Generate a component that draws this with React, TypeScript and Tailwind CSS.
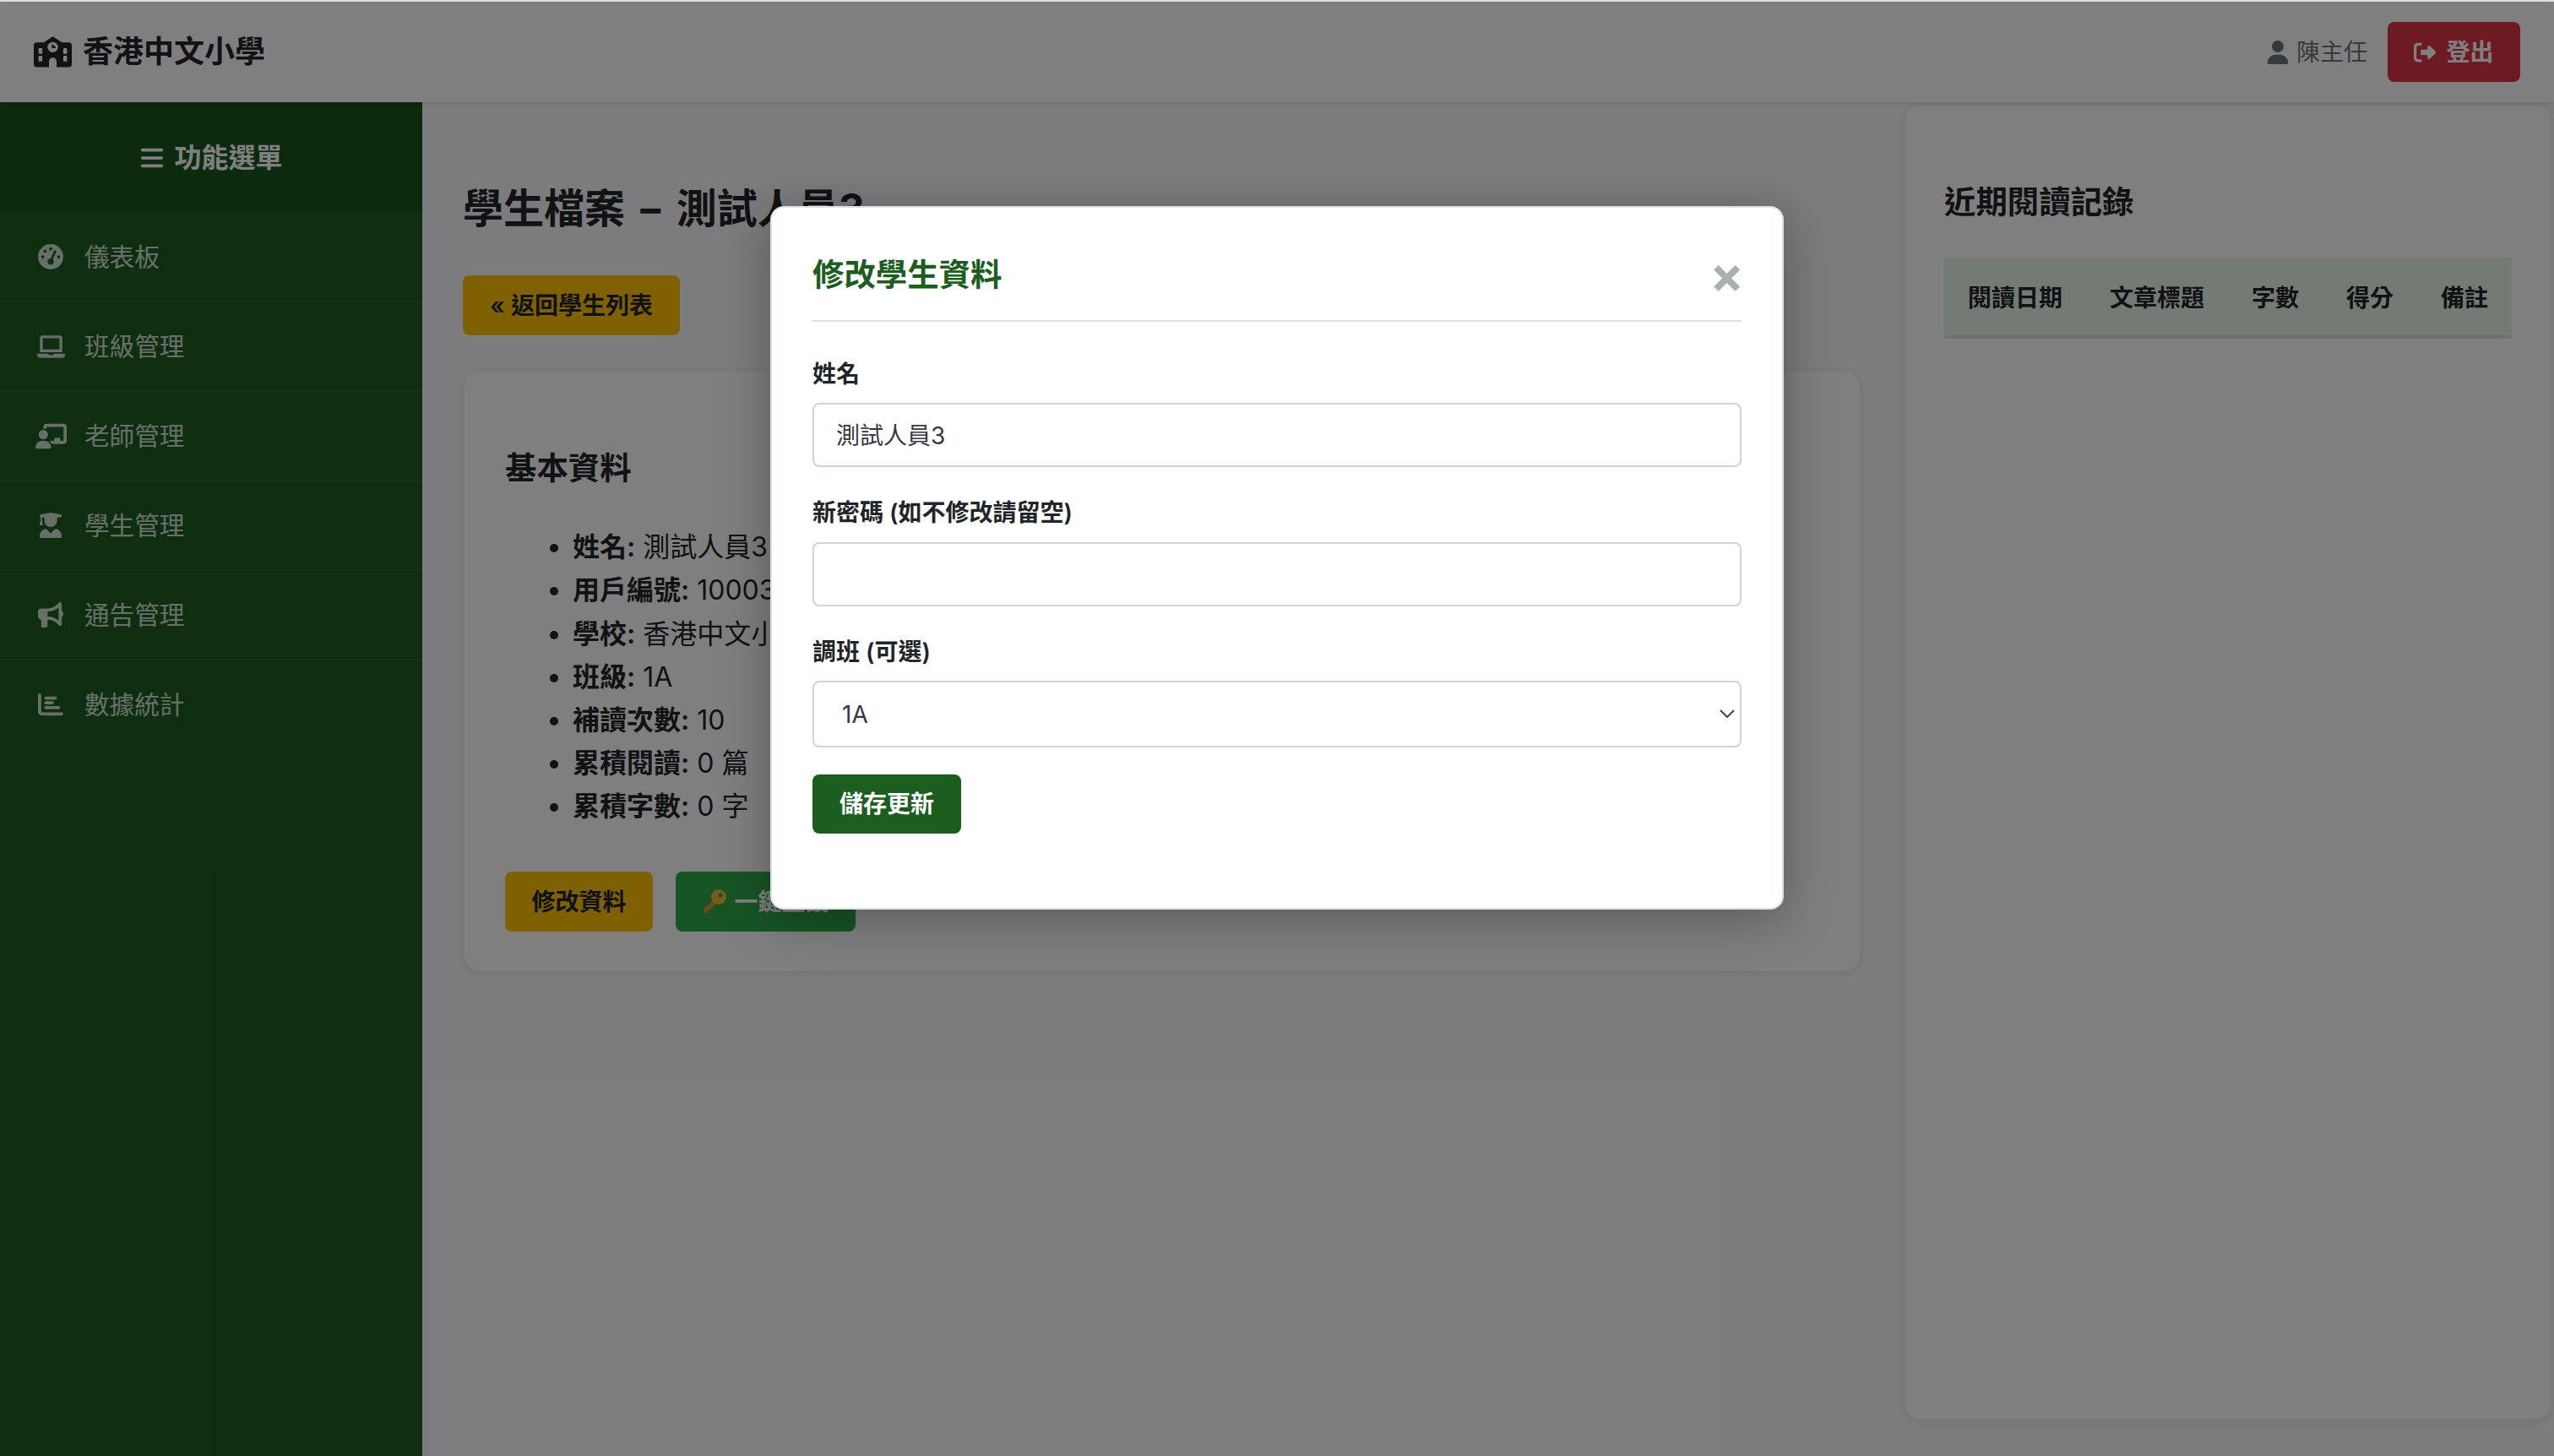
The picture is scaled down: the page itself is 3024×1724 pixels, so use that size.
import { FaBars, FaBullhorn, FaChalkboardUser, FaChartBar, FaGaugeHigh, FaRightFromBracket, FaSchool, FaUser, FaUserGraduate } from "react-icons/fa6";
import { FaLaptop } from "react-icons/fa";

const menuItems = [
  { label: "儀表板", icon: <FaGaugeHigh className="text-[30px]" /> },
  { label: "班級管理", icon: <FaLaptop className="text-[33px]" /> },
  { label: "老師管理", icon: <FaChalkboardUser className="text-[37px]" /> },
  { label: "學生管理", icon: <FaUserGraduate className="text-[30px]" /> },
  { label: "通告管理", icon: <FaBullhorn className="text-[30px]" /> },
  { label: "數據統計", icon: <FaChartBar className="text-[30px]" /> },
];

const studentInfo = [
  { label: "姓名", value: "測試人員3" },
  { label: "用戶編號", value: "10003" },
  { label: "學校", value: "香港中文小學" },
  { label: "班級", value: "1A" },
  { label: "補讀次數", value: "10" },
  { label: "累積閱讀", value: "0 篇" },
  { label: "累積字數", value: "0 字" },
];

const readingColumns = ["閱讀日期", "文章標題", "字數", "得分", "備註"];

const KeyIcon = () => (
  <svg viewBox="0 0 30 30" className="h-[30px] w-[30px] shrink-0">
    <path d="M2 25 L14 13 L18 17 L6 29 L3 29 Z" fill="#d9982b" />
    <circle cx="20" cy="10" r="9" fill="#f0b83c" />
    <circle cx="22" cy="8" r="2.5" fill="#2fa84b" />
  </svg>
);

export default function App() {
  return (
    <div lang="zh-Hant" className="flex h-screen flex-col overflow-hidden bg-[#f8f9fc] font-['Inter','Noto_Sans_CJK_TC',sans-serif] text-[32px] leading-[1.6] text-[#212529]">
      <div className="h-[2px] shrink-0 bg-[#e3e0e6]" />

      <div className="relative flex min-h-0 flex-1 flex-col">
        {/* Top bar */}
        <header className="z-10 flex h-[119px] shrink-0 items-center justify-between bg-white pl-[40px] pr-[40px] shadow-[0_2px_6px_rgba(0,0,0,0.1)]">
          <div className="flex items-center gap-[13px] text-[36px] font-semibold">
            <FaSchool className="text-[45px]" />
            <span className="pt-[1px]">香港中文小學</span>
          </div>
          <div className="flex items-center">
            <FaUser className="text-[28px] text-[#6c757d]" />
            <span className="ml-[8px] pt-[1px] text-[28px] text-[#6c757d]">陳主任</span>
            <button className="ml-[24px] flex h-[71px] w-[157px] items-center justify-center gap-[12px] rounded-[8px] bg-[#dc3545] text-[28px] font-semibold text-white">
              <FaRightFromBracket className="text-[26px]" />
              <span className="pt-[1px]">登出</span>
            </button>
          </div>
        </header>

        <div className="flex min-h-0 flex-1">
          {/* Sidebar */}
          <aside className="w-[500px] shrink-0 bg-[#1b5e20]">
            <div className="flex h-[131px] items-center justify-center gap-[11px] bg-black/10 text-[32px] font-semibold text-white">
              <FaBars className="text-[30px]" />
              <span className="pt-[1px]">功能選單</span>
            </div>
            {menuItems.map((item) => (
              <div key={item.label} className="flex h-[106px] items-center border-b-2 border-white/5 pl-[40px] text-[29.6px] text-white/80">
                <span className="flex w-[40px] justify-center">{item.icon}</span>
                <span className="ml-[20px] pt-[1px]">{item.label}</span>
              </div>
            ))}
          </aside>

          {/* Main column */}
          <main className="min-w-0 flex-1 pl-[48px] pr-[50px] pt-[92px]">
            <h2 className="text-[48px] font-bold leading-[1.4] [word-spacing:7px]">學生檔案 – 測試人員3</h2>
            <button className="mt-[46px] flex h-[71px] w-[257px] items-center justify-center rounded-[8px] bg-[#ffc107] pt-[2px] text-[28px] font-semibold">
              « 返回學生列表
            </button>

            <section className="mt-[41px] h-[713px] rounded-[20px] border-2 border-black/5 bg-white pl-[48px] pt-[88px] shadow-[0_2px_10px_rgba(0,0,0,0.08)]">
              <h3 className="text-[37.44px] font-bold leading-[53px]">基本資料</h3>
              <ul className="mt-[41px] list-disc pl-[80px] text-[32px] leading-[51.2px]">
                {studentInfo.map((row) => (
                  <li key={row.label}>
                    <b className="font-semibold">{row.label}:</b> {row.value}
                  </li>
                ))}
              </ul>
              <div className="mt-[51px] flex gap-[27px]">
                <button className="flex h-[71px] w-[175px] items-center justify-center rounded-[8px] bg-[#ffc107] pt-[2px] text-[28px] font-semibold">
                  修改資料
                </button>
                <button className="flex h-[71px] w-[213px] items-center justify-center gap-[8px] rounded-[8px] bg-[#2fa84b] text-[28px] font-semibold text-white">
                  <KeyIcon />
                  <span className="pt-[2px]">一鍵重設</span>
                </button>
              </div>
            </section>
          </main>

          {/* Reading records */}
          <aside className="mb-[42px] mr-[2px] mt-[2px] w-[768px] shrink-0 rounded-[20px] border-2 border-black/5 bg-white pl-[46px] pt-[88px] shadow-[0_2px_10px_rgba(0,0,0,0.08)]">
            <h3 className="text-[37.44px] font-bold leading-[53px]">近期閱讀記錄</h3>
            <table className="mt-[39px] border-collapse text-[28px]">
              <thead>
                <tr>
                  {readingColumns.map((col) => (
                    <th key={col} className="h-[94px] border-b-4 border-[#dee2e6] bg-[#e8f5e9] px-[28px] pt-[5px] text-left font-semibold">
                      {col}
                    </th>
                  ))}
                </tr>
              </thead>
            </table>
          </aside>
        </div>

        {/* Modal */}
        <div className="absolute inset-0 z-20 flex justify-center bg-black/50 pt-[242px]">
          <div className="h-[833px] w-[1200px] rounded-[16px] border-2 border-[#dee2e6] bg-white px-[48px] pt-[50px] shadow-[0_10px_60px_rgba(0,0,0,0.3)]">
            <div className="flex items-start justify-between border-b-2 border-[#dee2e6] pb-[27px]">
              <h3 className="pt-[3px] text-[37.44px] font-bold leading-[53px] text-[#1b5e20]">修改學生資料</h3>
              <span className="-mr-[3px] mt-[3px] h-[53px] text-[60px] font-bold leading-[53px] text-[#aab0aa]">×</span>
            </div>

            <label className="mt-[40px] block text-[28px] font-semibold">姓名</label>
            <input defaultValue="測試人員3" className="mt-[11px] block h-[76px] w-full rounded-[8px] border-2 border-[#ced4da] px-[26px] pb-[2px] text-[28px] text-[#343a40]" />

            <label className="mt-[32px] block text-[28px] font-semibold">新密碼 (如不修改請留空)</label>
            <input type="password" className="mt-[12px] block h-[76px] w-full rounded-[8px] border-2 border-[#ced4da] px-[26px] text-[28px] text-[#343a40]" />

            <label className="mt-[31px] block pt-[1px] text-[28px] font-semibold">調班 (可選)</label>
            <div className="relative mt-[12px]">
              <select defaultValue="1A" className="block h-[79px] w-full appearance-none rounded-[8px] border-2 border-[#ced4da] bg-white px-[33px] pt-[1px] text-[28px] text-[#343a40]">
                <option value="1A">1A</option>
              </select>
              <svg viewBox="0 0 18 10" className="absolute right-[8px] top-[34px] h-[10px] w-[18px] fill-none stroke-[#444] stroke-2">
                <path d="M1 1 L9 9 L17 1" />
              </svg>
            </div>

            <button className="mt-[32px] flex h-[70px] w-[176px] items-center justify-center rounded-[8px] bg-[#1b5e20] pt-[1px] text-[28px] font-semibold text-white">
              儲存更新
            </button>
          </div>
        </div>
      </div>
    </div>
  );
}
